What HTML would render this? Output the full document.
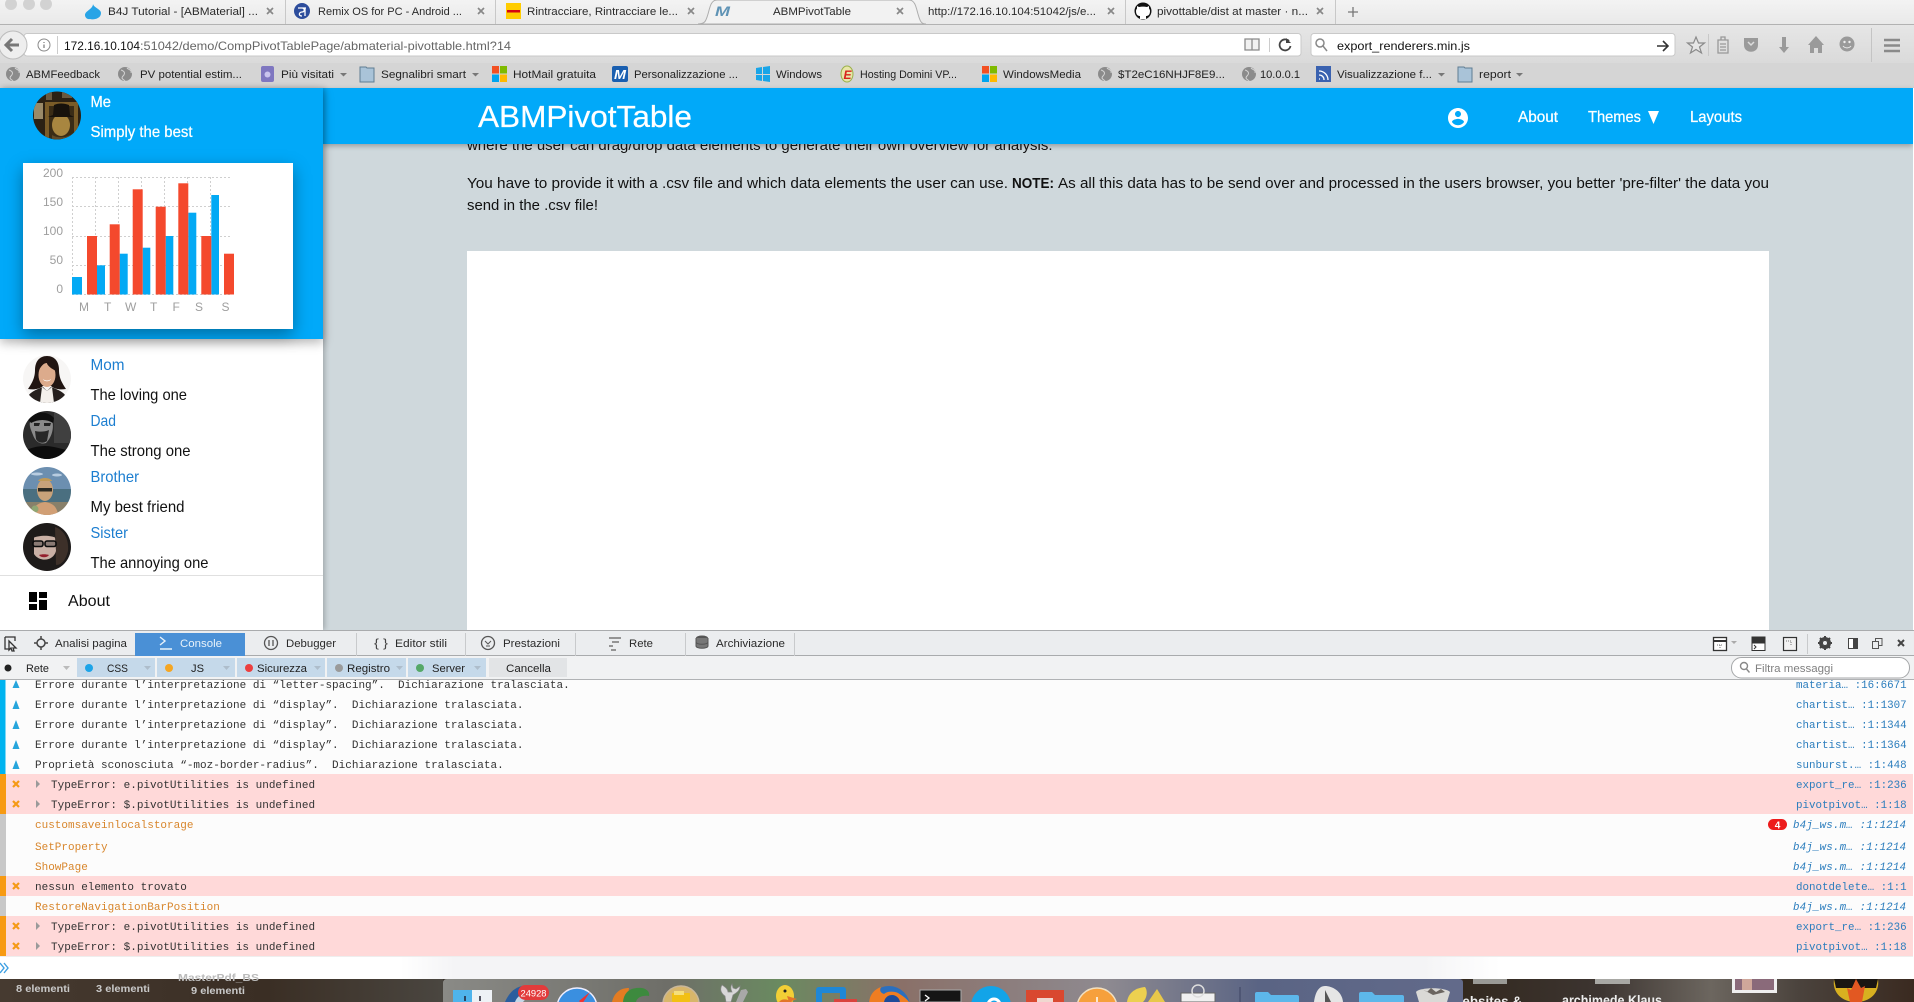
<!DOCTYPE html>
<html lang="it">
<head>
<meta charset="utf-8">
<title>ABMPivotTable</title>
<style>
html,body{margin:0;padding:0;width:1914px;height:1002px;overflow:hidden;background:#cfd8dc}
div{position:absolute}
#chrome{left:0;top:0;width:1914px;height:88px;background:#d8d8d8}
#tabs{left:0;top:0;width:1914px;height:24px;background:linear-gradient(#f3f3f3,#e9e9e9);border-bottom:1px solid #b2b2b2}
#navrow{left:0;top:25px;width:1914px;height:38px;background:linear-gradient(#e6e6e6,#dadada)}
#bmrow{left:0;top:63px;width:1914px;height:25px;background:#d5d5d5}
#main{left:323px;top:88px;width:1590px;height:542px;background:#cfd8dc}
#edge{left:1913px;top:88px;width:1px;height:891px;background:#fff}
#box{left:467px;top:251px;width:1302px;height:379px;background:#fff}
#navbar{left:323px;top:88px;width:1590px;height:56px;background:#01a9f9;box-shadow:0 2px 5px rgba(0,0,0,.28)}
#side{left:0;top:88px;width:323px;height:542px;background:#fff;box-shadow:2px 0 5px rgba(0,0,0,.22)}
#sidehead{left:0;top:88px;width:323px;height:251px;background:#01a9f9;box-shadow:0 4px 10px rgba(0,0,0,.28)}
#card{left:23px;top:163px;width:270px;height:166px;background:#fff;box-shadow:0 6px 16px rgba(0,0,0,.35)}
#dev{left:0;top:630px;width:1914px;height:349px;background:#fcfcfc}
#desk{left:0;top:979px;width:1914px;height:23px;background:#38302a}
svg{position:absolute;left:0;top:0;filter:blur(.3px)}
.s{font-family:"Liberation Sans",sans-serif}
.m{font-family:"Liberation Mono",monospace;font-size:11px;white-space:pre}
.r{font-family:"Liberation Mono",monospace;font-size:10.85px;white-space:pre}
.l{fill:#2b7dbd}
.i{font-style:italic}
.g{fill:#333}
.c{font-family:"Liberation Sans",sans-serif;font-size:11px;fill:#2a2a2a}
.b{font-family:"Liberation Sans",sans-serif;font-size:11px;fill:#222}
.h{font-family:"Liberation Sans",sans-serif;font-size:16px}
.w{stroke:#fff;stroke-width:.25}
.d{font-family:"Liberation Sans",sans-serif;font-size:15px;fill:#111}
.x{stroke:#888;stroke-width:1.7;fill:none}
.a{fill:#9e9e9e;font-family:"Liberation Sans",sans-serif;font-size:12px}
.v{fill:#222;font-family:"Liberation Sans",sans-serif;font-size:11px}
</style>
</head>
<body>
<div id="chrome"></div>
<div id="tabs"></div>
<div id="navrow"></div>
<div id="bmrow"></div>
<div id="main"></div>
<div id="box"></div>
<div id="navbar"></div>
<div id="side"></div>
<div id="sidehead"></div>
<div id="card"></div>
<div id="dev"></div>
<div id="desk"></div>
<div id="edge"></div>

<svg width="1914" height="1002" viewBox="0 0 1914 1002" xmlns="http://www.w3.org/2000/svg">
<defs>
<clipPath id="cc"><rect x="323" y="144" width="1590" height="486"/></clipPath>
<clipPath id="a0"><circle cx="57" cy="115.5" r="24"/></clipPath>
<clipPath id="a1"><circle cx="47" cy="379" r="24"/></clipPath>
<clipPath id="a2"><circle cx="47" cy="435" r="24"/></clipPath>
<clipPath id="a3"><circle cx="47" cy="491" r="24"/></clipPath>
<clipPath id="a4"><circle cx="47" cy="547" r="24"/></clipPath>
<linearGradient id="dock" x1="0" x2="1" y1="0" y2="0">
<stop offset="0" stop-color="#8a8a86"/><stop offset=".22" stop-color="#6e6e68"/><stop offset=".33" stop-color="#6a8a60"/><stop offset=".45" stop-color="#8a7068"/><stop offset=".65" stop-color="#8e8a90"/><stop offset=".8" stop-color="#5a6484"/><stop offset="1" stop-color="#626a8a"/>
</linearGradient>
<linearGradient id="dl" x1="0" x2="1" y1="0" y2="0">
<stop offset="0" stop-color="#463a30"/><stop offset=".6" stop-color="#3a2e24"/><stop offset="1" stop-color="#4a4640"/>
</linearGradient>
<linearGradient id="dr" x1="0" x2="1" y1="0" y2="0">
<stop offset="0" stop-color="#33291f"/><stop offset=".3" stop-color="#3c3430"/><stop offset=".55" stop-color="#6c665f"/><stop offset=".75" stop-color="#4a423c"/><stop offset="1" stop-color="#3a2a20"/>
</linearGradient>
<linearGradient id="sh" x1="0" x2="1" y1="0" y2="0">
<stop offset="0" stop-color="#fff"/><stop offset=".05" stop-color="#f4f4f6"/><stop offset=".93" stop-color="#f4f4f6"/><stop offset="1" stop-color="#fff"/>
</linearGradient>
</defs>

<!-- window controls -->
<circle cx="11" cy="4" r="6" fill="#d2d2d2"/><circle cx="29" cy="4" r="6" fill="#d2d2d2"/><circle cx="46" cy="4" r="6" fill="#d2d2d2"/>

<!-- tabs -->
<path d="M698 24c7 0 8-3 10-10s3-14 9-14h192c6 0 7 7 9 14s3 10 8 10z" fill="#f2f2f2" stroke="#adadad"/>
<path d="M93 4c0 5-8 7-8 11a4 4 0 0 0 5 4c3 1 11 0 11-6 0-4-7-5-8-9z" fill="#28a4e6"/>
<text class="c" x="108" y="15" textLength="150" lengthAdjust="spacingAndGlyphs">B4J Tutorial - [ABMaterial] ...</text>
<path class="x" d="M267 8l6 6m0-6l-6 6"/>
<path d="M285.500 0v24" stroke="#c8c8c8"/>
<circle cx="302" cy="11" r="8" fill="#2d4d9c"/>
<path d="M298 8h8M302 8c3 0 3 4 0 4s-4 4 0 4M305 8v8" stroke="#fff" stroke-width="1.300" fill="none"/>
<text class="c" x="318" y="15" textLength="144" lengthAdjust="spacingAndGlyphs">Remix OS for PC - Android ...</text>
<path class="x" d="M478 8l6 6m0-6l-6 6"/>
<path d="M495.500 0v24" stroke="#c8c8c8"/>
<rect x="506" y="3" width="15" height="16" fill="#fc0"/>
<rect x="507" y="10" width="13" height="2.500" fill="#d40511"/>
<text class="c" x="527" y="15" textLength="151" lengthAdjust="spacingAndGlyphs">Rintracciare, Rintracciare le...</text>
<path class="x" d="M688 8l6 6m0-6l-6 6"/>
<text class="s" x="715" y="16" font-size="14" font-weight="bold" font-style="italic" fill="#5f93b5" textLength="15" lengthAdjust="spacingAndGlyphs">M</text>
<text class="c" x="773" y="15" textLength="78" lengthAdjust="spacingAndGlyphs">ABMPivotTable</text>
<path class="x" d="M897 8l6 6m0-6l-6 6"/>
<text class="c" x="928" y="15" textLength="168" lengthAdjust="spacingAndGlyphs">http://172.16.10.104:51042/js/e...</text>
<path class="x" d="M1108 8l6 6m0-6l-6 6"/>
<path d="M1125.500 0v24" stroke="#c8c8c8"/>
<circle cx="1143" cy="11" r="8.500" fill="#111"/>
<path d="M1140 19v-3c-2 0-4-1-4-5 0-1 .5-2 1-2.500V6l2 1c2-.5 6-.5 8 0l2-1v2.500c.5.5 1 1.500 1 2.500 0 4-2 5-4 5v3z" fill="#fff"/>
<text class="c" x="1157" y="15" textLength="151" lengthAdjust="spacingAndGlyphs">pivottable/dist at master · n...</text>
<path class="x" d="M1317 8l6 6m0-6l-6 6"/>
<path d="M1335.500 0v24" stroke="#c8c8c8"/>
<path d="M1353 7v10M1348 12h10" stroke="#777" stroke-width="1.300"/>

<!-- nav row -->
<rect x="24" y="33.500" width="1277" height="22.500" rx="3" fill="#fff" stroke="#c9c9c9"/>
<circle cx="13" cy="45" r="14" fill="#eee" stroke="#bcbcbc"/>
<path d="M7 45h12M12 39l-6 6 6 6" stroke="#777" stroke-width="3" fill="none"/>
<circle cx="44" cy="45" r="6" fill="none" stroke="#8a8a8a"/>
<path d="M44 42v1M44 44.500v3.500" stroke="#777" stroke-width="1.200"/>
<path d="M57.500 36v18" stroke="#ccc"/>
<text class="s" x="64" y="50" font-size="12" fill="#111" textLength="76" lengthAdjust="spacingAndGlyphs">172.16.10.104</text>
<text class="s" x="140" y="50" font-size="12" fill="#666" textLength="371" lengthAdjust="spacingAndGlyphs">:51042/demo/CompPivotTablePage/abmaterial-pivottable.html?14</text>
<path d="M1245 39h14v11h-14zM1252 39v11" fill="#f1f1f1" stroke="#8a8a8a" stroke-width="1.300"/>
<path d="M1269.500 38v14" stroke="#ccc"/>
<path d="M1289 41a5.500 5.500 0 1 0 1.500 5" fill="none" stroke="#444" stroke-width="1.800"/>
<path d="M1286 38v5h5z" fill="#444"/>
<rect x="1311" y="33.500" width="364" height="22.500" rx="3" fill="#fff" stroke="#c9c9c9"/>
<circle cx="1320" cy="43" r="4" fill="none" stroke="#888" stroke-width="1.500"/>
<path d="M1323 46l4 5" stroke="#888" stroke-width="1.500"/>
<text class="s" x="1337" y="50" font-size="12" fill="#111" textLength="133" lengthAdjust="spacingAndGlyphs">export_renderers.min.js</text>
<path d="M1657 46h10M1663 41l5 5-5 5" stroke="#333" stroke-width="1.600" fill="none"/>
<path d="M1696 37l2.500 6h6l-5 4 2 6-5.500-3.500-5.500 3.500 2-6-5-4h6z" fill="#e6e6e6" stroke="#8a8a8a" stroke-width="1.200"/>
<path d="M1708.500 34v22" stroke="#c8c8c8"/>
<path d="M1718 40h10v13h-10zM1721 37h4v3h-4zM1720 44h6M1720 47h6M1720 50h6" fill="none" stroke="#999" stroke-width="1.300"/>
<path d="M1744 38h14v7c0 9-14 9-14 0z" fill="#9a9a9a"/><path d="M1748 42l3 3 3-3" stroke="#ddd" stroke-width="1.500" fill="none"/>
<path d="M1782 37h4v10h3l-5 6-5-6h3z" fill="#9a9a9a"/>
<path d="M1816 36l8 9h-2v8h-4v-5h-4v5h-4v-8h-2z" fill="#9a9a9a"/>
<circle cx="1847" cy="44" r="7.500" fill="#9a9a9a"/><circle cx="1844.500" cy="42" r="1.200" fill="#eee"/><circle cx="1849.500" cy="42" r="1.200" fill="#eee"/><path d="M1843 46c2 2.500 6 2.500 8 0" stroke="#eee" fill="none"/>
<path d="M1871.500 28v34" stroke="#c4c4c4"/>
<path d="M1884 40h16M1884 45.500h16M1884 51h16" stroke="#8a8a8a" stroke-width="2.500"/>

<!-- bookmarks -->
<circle cx="13" cy="74" r="7" fill="#8b8b8b"/><path d="M9 70c3 1 5 3 2 6s2 4 2 5M15 68c2 2 5 2 4 5" stroke="#d5d5d5" fill="none"/>
<text class="b" x="26" y="78" textLength="74" lengthAdjust="spacingAndGlyphs">ABMFeedback</text>
<circle cx="125" cy="74" r="7" fill="#8b8b8b"/><path d="M121 70c3 1 5 3 2 6s2 4 2 5M127 68c2 2 5 2 4 5" stroke="#d5d5d5" fill="none"/>
<text class="b" x="140" y="78" textLength="102" lengthAdjust="spacingAndGlyphs">PV potential estim...</text>
<rect x="261" y="66" width="13" height="16" rx="2" fill="#7f77c0"/><circle cx="267.500" cy="74.500" r="3" fill="#c9c4ee"/>
<text class="b" x="281" y="78" textLength="53" lengthAdjust="spacingAndGlyphs">Più visitati</text>
<path d="M340 73h7l-3.500 3.500z" fill="#777"/>
<path d="M360 67h6l1 1h7v14h-14z" fill="#a9c3d8" stroke="#607d92"/>
<text class="b" x="381" y="78" textLength="85" lengthAdjust="spacingAndGlyphs">Segnalibri smart</text>
<path d="M472 73h7l-3.500 3.500z" fill="#777"/>
<rect x="492" y="66" width="7" height="7.500" fill="#f25022"/><rect x="500" y="66" width="7" height="7.500" fill="#7fba00"/><rect x="492" y="74.500" width="7" height="7.500" fill="#00a4ef"/><rect x="500" y="74.500" width="7" height="7.500" fill="#ffb900"/>
<text class="b" x="513" y="78" textLength="83" lengthAdjust="spacingAndGlyphs">HotMail gratuita</text>
<rect x="612" y="66" width="16" height="16" rx="2" fill="#1a5fb0"/>
<text class="s" x="614" y="79" font-size="13" font-weight="bold" font-style="italic" fill="#fff" textLength="12" lengthAdjust="spacingAndGlyphs">M</text>
<text class="b" x="634" y="78" textLength="104" lengthAdjust="spacingAndGlyphs">Personalizzazione ...</text>
<path d="M756 68l6-1v7h-6zM763 67l7-1v8h-7zM756 75h6v6l-6-1zM763 75h7v7l-7-1z" fill="#19a5e8"/>
<text class="b" x="776" y="78" textLength="46" lengthAdjust="spacingAndGlyphs">Windows</text>
<ellipse cx="847" cy="74" rx="6" ry="8" fill="#e8e6a8" stroke="#9ab04a"/>
<text class="s" x="843.500" y="79" font-size="12" font-weight="bold" font-style="italic" fill="#d8231c">E</text>
<text class="b" x="860" y="78" textLength="97" lengthAdjust="spacingAndGlyphs">Hosting Domini VP...</text>
<rect x="982" y="66" width="7" height="7.500" fill="#f25022"/><rect x="990" y="66" width="7" height="7.500" fill="#7fba00"/><rect x="982" y="74.500" width="7" height="7.500" fill="#00a4ef"/><rect x="990" y="74.500" width="7" height="7.500" fill="#ffb900"/>
<text class="b" x="1003" y="78" textLength="78" lengthAdjust="spacingAndGlyphs">WindowsMedia</text>
<circle cx="1105" cy="74" r="7" fill="#8b8b8b"/><path d="M1101 70c3 1 5 3 2 6s2 4 2 5M1107 68c2 2 5 2 4 5" stroke="#d5d5d5" fill="none"/>
<text class="b" x="1118" y="78" textLength="107" lengthAdjust="spacingAndGlyphs">$T2eC16NHJF8E9...</text>
<circle cx="1249" cy="74" r="7" fill="#8b8b8b"/><path d="M1245 70c3 1 5 3 2 6s2 4 2 5M1251 68c2 2 5 2 4 5" stroke="#d5d5d5" fill="none"/>
<text class="b" x="1260" y="78" textLength="40" lengthAdjust="spacingAndGlyphs">10.0.0.1</text>
<rect x="1316" y="66" width="15" height="16" fill="#3a62b0"/><path d="M1319 79h1M1319 75c3 0 5 2 5 5M1319 71c5 0 9 4 9 9" stroke="#fff" stroke-width="1.300" fill="none"/>
<text class="b" x="1337" y="78" textLength="95" lengthAdjust="spacingAndGlyphs">Visualizzazione f...</text>
<path d="M1438 73h7l-3.500 3.500z" fill="#777"/>
<path d="M1458 67h6l1 1h7v14h-14z" fill="#a9c3d8" stroke="#607d92"/>
<text class="b" x="1479" y="78" textLength="32" lengthAdjust="spacingAndGlyphs">report</text>
<path d="M1516 73h7l-3.500 3.500z" fill="#777"/>

<!-- content text -->
<g clip-path="url(#cc)">
<text class="d" x="467" y="150" textLength="585.500" lengthAdjust="spacingAndGlyphs">where the user can drag/drop data elements to generate their own overview for analysis.</text>
<text class="d" x="467" y="188" textLength="541" lengthAdjust="spacingAndGlyphs">You have to provide it with a .csv file and which data elements the user can use.</text>
<text class="d" x="1012" y="188" font-weight="bold" textLength="42" lengthAdjust="spacingAndGlyphs">NOTE:</text>
<text class="d" x="1058" y="188" textLength="711" lengthAdjust="spacingAndGlyphs">As all this data has to be send over and processed in the users browser, you better 'pre-filter' the data you</text>
<text class="d" x="467" y="210" textLength="131" lengthAdjust="spacingAndGlyphs">send in the .csv file!</text>
</g>

<!-- navbar -->
<text class="s w" x="478" y="127" font-size="31" fill="#fff" textLength="214" lengthAdjust="spacingAndGlyphs">ABMPivotTable</text>
<path transform="translate(1446 106)" fill="#fff" fill-rule="evenodd" d="M12 2C6.480 2 2 6.480 2 12s4.480 10 10 10 10-4.480 10-10S17.520 2 12 2zm0 3c1.660 0 3 1.340 3 3s-1.340 3-3 3-3-1.340-3-3 1.340-3 3-3zm0 14.200c-2.500 0-4.710-1.280-6-3.220.03-1.990 4-3.080 6-3.080 1.990 0 5.970 1.090 6 3.080-1.290 1.940-3.500 3.220-6 3.220z"/>
<text class="h w" x="1518" y="122" fill="#fff" textLength="40" lengthAdjust="spacingAndGlyphs">About</text>
<text class="h w" x="1588" y="122" fill="#fff" textLength="53" lengthAdjust="spacingAndGlyphs">Themes</text>
<path d="M1648 111h11l-5.500 13z" fill="#fff"/>
<text class="h w" x="1690" y="122" fill="#fff" textLength="52" lengthAdjust="spacingAndGlyphs">Layouts</text>

<!-- sidebar header -->
<g clip-path="url(#a0)">
<rect x="33" y="91" width="48" height="49" fill="#2b2114"/>
<path d="M34 103h9v16h-9z" fill="#9a8a68"/>
<path d="M46 92h6v8h-6zM62 91h10v7H62z" fill="#6a5a40"/>
<path d="M45 102h33v36H45z" fill="#7a5c28"/>
<path d="M49 106h25v32H49z" fill="#3a2c16"/>
<ellipse cx="61" cy="125" rx="9" ry="11" fill="#a88640"/>
<path d="M48 117h26l-4-2-1-10c-5-2-11-2-15 0l-1 10z" fill="#17120c"/>
<path d="M52 135c5 3 13 3 18 0v5H52z" fill="#5e4a28"/>
</g>
<text class="h w" x="90.500" y="107" fill="#fff" textLength="20.500" lengthAdjust="spacingAndGlyphs">Me</text>
<text class="h w" x="90.500" y="137" fill="#fff" textLength="102" lengthAdjust="spacingAndGlyphs">Simply the best</text>

<!-- chart -->
<g stroke="#cfcfcf" stroke-dasharray="2 2" fill="none">
<path d="M72 177.500h159M72 206.500h159M72 236.500h159M72 265.500h159M72 294.500h159"/>
<path d="M72.500 177v118M95.500 177v118M118.500 177v118M141.500 177v118M164.500 177v118M187.500 177v118M210.500 177v118"/>
</g>
<g fill="#03a9f4">
<rect x="72" y="277" width="10" height="17.500"/><rect x="97" y="265.300" width="8" height="29.200"/><rect x="119.700" y="253.700" width="8" height="40.800"/><rect x="142.700" y="247.700" width="7.600" height="46.800"/><rect x="165.700" y="236" width="7.600" height="58.500"/><rect x="188.300" y="212.700" width="8" height="81.800"/><rect x="211.300" y="195" width="7.700" height="99.500"/>
</g>
<g fill="#f4492d">
<rect x="87" y="236" width="10" height="58.500"/><rect x="109.700" y="224.300" width="10" height="70.200"/><rect x="132.700" y="189.300" width="10" height="105.200"/><rect x="155.700" y="206.700" width="10" height="87.800"/><rect x="178.300" y="183.300" width="10" height="111.200"/><rect x="201.300" y="236" width="10" height="58.500"/><rect x="224" y="253.700" width="10" height="40.800"/>
</g>
<text class="a" x="63" y="177" text-anchor="end">200</text>
<text class="a" x="63" y="206" text-anchor="end">150</text>
<text class="a" x="63" y="235" text-anchor="end">100</text>
<text class="a" x="63" y="264" text-anchor="end">50</text>
<text class="a" x="63" y="293" text-anchor="end">0</text>
<text class="a" x="79" y="311">M</text><text class="a" x="104" y="311">T</text><text class="a" x="125" y="311">W</text><text class="a" x="150" y="311">T</text><text class="a" x="172.500" y="311">F</text><text class="a" x="195" y="311">S</text><text class="a" x="221.500" y="311">S</text>

<!-- contacts -->
<g clip-path="url(#a1)">
<rect x="23" y="355" width="48" height="48" fill="#f7f6f5"/>
<path d="M47 356c-8 0-12 6-12 14 0 8-3 13-7 19 6 1 12 0 15-3l8 0c3 3 9 4 15 3-4-6-7-11-7-19 0-8-4-14-12-14z" fill="#211512"/>
<ellipse cx="47" cy="375" rx="8.500" ry="12" fill="#dcab8c"/>
<path d="M38 372c2-5 6-9 9-10-1 3 5 7 9 9-1-7-4-11-9-11s-8 5-9 12z" fill="#211512"/>
<path d="M43 379c2 2 6 2 8 0-1 3-7 3-8 0z" fill="#fff"/>
<path d="M25 403c2-10 10-13 18-16l4 4 4-4c8 3 16 6 18 16z" fill="#26201e"/>
<path d="M42 387l5 4 5-4 2 16H40z" fill="#f4f0ec"/>
</g>
<g clip-path="url(#a2)">
<rect x="23" y="411" width="48" height="48" fill="#2b2b2b"/>
<rect x="54" y="411" width="17" height="32" fill="#404040"/>
<path d="M30 422c3-7 18-8 22-2 2 6 1 16-6 23-6 2-11-2-13-8-2-5-4-9-3-13z" fill="#8a8a8a"/>
<path d="M27 418c6-7 20-8 27 0l-1 5c-6-4-15-4-22 0z" fill="#0f0f0f"/>
<path d="M34 423h6l-1 3h-5zM44 423h7l-1 3h-6z" fill="#222"/>
<path d="M35 431c4 1 10 1 14-1l-2 11c-4 3-9 2-11-2z" fill="#262626"/>
<path d="M23 459v-8c8-3 14-5 22-5s16 3 26 5v8z" fill="#0c0c0c"/>
</g>
<g clip-path="url(#a3)">
<rect x="23" y="467" width="48" height="24" fill="#6c8fb0"/>
<ellipse cx="37" cy="474" rx="6" ry="1.500" fill="#b8cce0"/>
<ellipse cx="57" cy="475" rx="5" ry="1.500" fill="#b8cce0"/>
<rect x="23" y="489" width="48" height="13" fill="#4a6f80"/>
<rect x="23" y="502" width="48" height="13" fill="#88806a"/>
<ellipse cx="45" cy="490" rx="8" ry="11" fill="#c8a27a"/>
<path d="M38 481c2-4 12-4 14 0z" fill="#c09a58"/>
<rect x="38" y="488" width="14" height="3.500" fill="#2a2a24"/>
<path d="M32 515c1-9 6-12 13-13 7 1 12 4 13 13z" fill="#d19f75"/>
<circle cx="35" cy="509" r="3.500" fill="#8fa673"/>
</g>
<g clip-path="url(#a4)">
<rect x="23" y="523" width="48" height="48" fill="#1e1b1a"/>
<path d="M55 527c9 3 14 12 13 24-2 8-6 14-12 14z" fill="#3d3029"/>
<path d="M34 536c6-4 17-4 21 1l1 14c-3 11-17 11-22 3z" fill="#c9b0a5"/>
<path d="M33 536c6-6 18-5 23 2-5-3-17-3-23 0z" fill="#1e1b1a"/>
<rect x="33" y="541" width="10" height="5.500" rx="2" fill="#8a7a74" stroke="#0c0c0c" stroke-width="1.600"/>
<rect x="45" y="541" width="11" height="5.500" rx="2" fill="#8a7a74" stroke="#0c0c0c" stroke-width="1.600"/>
<path d="M39 555c3-1 7-1 10 0-2 3-8 3-10 0z" fill="#94202e"/>
</g>
<text class="h" x="90.500" y="370" fill="#1c7ed0" textLength="34" lengthAdjust="spacingAndGlyphs">Mom</text>
<text class="h" x="90.500" y="400" fill="#111" textLength="96.500" lengthAdjust="spacingAndGlyphs">The loving one</text>
<text class="h" x="90.500" y="426" fill="#1c7ed0" textLength="25.500" lengthAdjust="spacingAndGlyphs">Dad</text>
<text class="h" x="90.500" y="456" fill="#111" textLength="100" lengthAdjust="spacingAndGlyphs">The strong one</text>
<text class="h" x="90.500" y="482" fill="#1c7ed0" textLength="48.500" lengthAdjust="spacingAndGlyphs">Brother</text>
<text class="h" x="90.500" y="512" fill="#111" textLength="94" lengthAdjust="spacingAndGlyphs">My best friend</text>
<text class="h" x="90.500" y="538" fill="#1c7ed0" textLength="37.500" lengthAdjust="spacingAndGlyphs">Sister</text>
<text class="h" x="90.500" y="568" fill="#111" textLength="118" lengthAdjust="spacingAndGlyphs">The annoying one</text>
<path d="M0 575.500h323" stroke="#e0e0e0"/>
<path d="M29 592h8v10h-8zM39 592h8v6h-8zM29 604h8v6h-8zM39 600h8v10h-8z" fill="#000"/>
<text class="h" x="68" y="606" fill="#111" textLength="42" lengthAdjust="spacingAndGlyphs">About</text>

<!-- devtools toolbar -->
<rect x="0" y="630" width="1914" height="26" fill="#ebedef"/>
<path d="M0 630.500h1914M0 655.500h1914" stroke="#a9abad"/>
<rect x="0" y="656" width="1914" height="23" fill="#f1f2f3"/>
<path d="M0 679.500h1914" stroke="#b0b2b4"/>
<rect x="135" y="633" width="110" height="23" fill="#4a90d6"/>
<path d="M5 637h10v4M5 637v12h4M9 641l7 7-3 0 1 3-2 0-1-3-2 2z" fill="none" stroke="#333" stroke-width="1.300"/>
<circle cx="41" cy="643" r="4" fill="none" stroke="#444" stroke-width="1.500"/><path d="M41 636v3M41 647v3M34 643h3M45 643h3" stroke="#444" stroke-width="1.500"/>
<text class="c" x="55" y="647" textLength="72" lengthAdjust="spacingAndGlyphs">Analisi pagina</text>
<path d="M160 637l5 4-5 4M160 649h12" stroke="#e8f2fa" stroke-width="1.400" fill="none"/>
<text class="c" x="180" y="647" style="fill:#e8f2fa" textLength="42" lengthAdjust="spacingAndGlyphs">Console</text>
<circle cx="271" cy="643" r="6.500" fill="none" stroke="#555" stroke-width="1.300"/><path d="M269 640v6M273 640v6" stroke="#555" stroke-width="1.300"/>
<text class="c" x="286" y="647" textLength="50" lengthAdjust="spacingAndGlyphs">Debugger</text>
<path d="M356.500 633v23M465.500 633v23M575.500 633v23M685.500 633v23M794.500 633v23" stroke="#c8cacc"/>
<text class="s" x="374" y="647" font-size="12" fill="#444" textLength="14" lengthAdjust="spacingAndGlyphs">{ }</text>
<text class="c" x="395" y="647" textLength="52" lengthAdjust="spacingAndGlyphs">Editor stili</text>
<circle cx="488" cy="643" r="6.500" fill="none" stroke="#555" stroke-width="1.300"/><path d="M485 641l3 3 3-3M486 646h4" stroke="#555" fill="none"/>
<text class="c" x="503" y="647" textLength="57" lengthAdjust="spacingAndGlyphs">Prestazioni</text>
<path d="M609 638h12M612 642h7M609 646h4M611 650h5" stroke="#777" stroke-width="1.400"/>
<text class="c" x="629" y="647" textLength="24" lengthAdjust="spacingAndGlyphs">Rete</text>
<ellipse cx="702" cy="638" rx="6" ry="2.500" fill="#555"/><path d="M696 638v4c0 3 12 3 12 0v-4M696 642v4c0 3 12 3 12 0v-4" fill="#777" stroke="#555"/>
<text class="c" x="716" y="647" textLength="69" lengthAdjust="spacingAndGlyphs">Archiviazione</text>

<!-- devtools right controls -->
<rect x="1713.500" y="637.500" width="13" height="13" fill="#fff" stroke="#333" stroke-width="1.300"/><path d="M1714 641h12" stroke="#333" stroke-width="2"/><path d="M1717 645h6M1720 645v4" stroke="#777" stroke-dasharray="1 1"/>
<path d="M1731 641h6l-3 3z" fill="#aaa"/>
<rect x="1752" y="637" width="13" height="13.500" fill="#fff" stroke="#333"/><rect x="1752" y="637" width="13" height="6.500" fill="#333"/><path d="M1754 645l2 2-2 2" stroke="#333" fill="none"/>
<rect x="1783.500" y="637.500" width="13" height="13" fill="#f2f2f2" stroke="#333" stroke-width="1.200"/><path d="M1786 641h5v4" stroke="#777" stroke-dasharray="1 1" fill="none"/>
<path d="M1807.500 634v20" stroke="#c8cacc"/>
<circle cx="1825" cy="643" r="4.500" fill="none" stroke="#444" stroke-width="3"/><path d="M1825 636v14M1818 643h14M1820 638l10 10M1830 638l-10 10" stroke="#444" stroke-width="2"/><circle cx="1825" cy="643" r="2" fill="#ebedef"/>
<rect x="1848.500" y="638.500" width="9" height="10" fill="#fff" stroke="#444"/><rect x="1853" y="638" width="5" height="11" fill="#444"/>
<path d="M1872.500 641.500h6v7h-6zM1875.500 641v-2.500h6.500v7h-3" fill="none" stroke="#555"/>
<path d="M1898 640l6 6m0-6l-6 6" stroke="#444" stroke-width="2"/>

<!-- devtools filters -->
<circle cx="8" cy="668" r="3.500" fill="#222"/>
<text class="v" x="26" y="672" textLength="23" lengthAdjust="spacingAndGlyphs">Rete</text>
<path d="M63 666h7l-3.500 4z" fill="#bbb"/>
<g fill="#c5d9ea">
<rect x="77" y="658" width="78" height="19"/><rect x="157" y="658" width="78" height="19"/><rect x="237" y="658" width="88" height="19"/><rect x="327" y="658" width="79" height="19"/><rect x="408" y="658" width="78" height="19"/>
</g>
<rect x="489" y="658" width="78" height="19" fill="#e2e4e6"/>
<circle cx="89" cy="668" r="4" fill="#1ca4e8"/><text class="v" x="107" y="672" textLength="21" lengthAdjust="spacingAndGlyphs">CSS</text><path d="M144 666h7l-3.500 4z" fill="#aebdcb"/>
<circle cx="169" cy="668" r="4" fill="#f5a623"/><text class="v" x="191" y="672" textLength="13" lengthAdjust="spacingAndGlyphs">JS</text><path d="M223 666h7l-3.500 4z" fill="#aebdcb"/>
<circle cx="249" cy="668" r="4" fill="#ec3f3f"/><text class="v" x="257" y="672" textLength="50" lengthAdjust="spacingAndGlyphs">Sicurezza</text><path d="M314 666h7l-3.500 4z" fill="#aebdcb"/>
<circle cx="339" cy="668" r="4" fill="#9a9a9a"/><text class="v" x="347" y="672" textLength="43" lengthAdjust="spacingAndGlyphs">Registro</text><path d="M396 666h7l-3.500 4z" fill="#aebdcb"/>
<circle cx="420" cy="668" r="4" fill="#55a868"/><text class="v" x="432" y="672" textLength="33" lengthAdjust="spacingAndGlyphs">Server</text><path d="M474 666h7l-3.500 4z" fill="#aebdcb"/>
<text class="v" x="506" y="672" textLength="45" lengthAdjust="spacingAndGlyphs">Cancella</text>
<rect x="1731.500" y="657.500" width="178" height="20.500" rx="10" fill="#fff" stroke="#a5a7a9"/>
<circle cx="1744" cy="666" r="3.500" fill="none" stroke="#888" stroke-width="1.400"/><path d="M1746.500 669l3 3.500" stroke="#888" stroke-width="1.400"/>
<text class="s" x="1755" y="672" font-size="11" fill="#808080" textLength="78" lengthAdjust="spacingAndGlyphs">Filtra messaggi</text>

<!-- log rows -->
<g fill="#ffd9d9">
<rect x="0" y="774" width="1913" height="40"/><rect x="0" y="876" width="1913" height="20"/><rect x="0" y="916" width="1913" height="40"/>
</g>
<rect x="0" y="680" width="5.500" height="94" fill="#00b4f0"/>
<rect x="0" y="774" width="6" height="40" fill="#f79a12"/>
<rect x="0" y="814" width="6" height="62" fill="#c8c8c8"/>
<rect x="0" y="876" width="6" height="20" fill="#f79a12"/>
<rect x="0" y="896" width="6" height="20" fill="#c8c8c8"/>
<rect x="0" y="916" width="6" height="40" fill="#f79a12"/>

<g fill="#26a5dc">
<path d="M16 680l3.500 8h-7z"/><path d="M16 700l3.500 9h-7z"/><path d="M16 720l3.500 9h-7z"/><path d="M16 740l3.500 9h-7z"/><path d="M16 760l3.500 9h-7z"/>
</g>
<g stroke="#f59a16" stroke-width="2.200" fill="none">
<path d="M13 781l6 6m0-6l-6 6"/><path d="M13 801l6 6m0-6l-6 6"/><path d="M13 883l6 6m0-6l-6 6"/><path d="M13 923l6 6m0-6l-6 6"/><path d="M13 943l6 6m0-6l-6 6"/>
</g>
<g fill="#9a9a9a">
<path d="M36 780l4 4-4 4z"/><path d="M36 800l4 4-4 4z"/><path d="M36 922l4 4-4 4z"/><path d="M36 942l4 4-4 4z"/>
</g>

<text class="m g" x="35" y="688">Errore durante l’interpretazione di “letter-spacing”.  Dichiarazione tralasciata.</text>
<text class="m g" x="35" y="708">Errore durante l’interpretazione di “display”.  Dichiarazione tralasciata.</text>
<text class="m g" x="35" y="728">Errore durante l’interpretazione di “display”.  Dichiarazione tralasciata.</text>
<text class="m g" x="35" y="748">Errore durante l’interpretazione di “display”.  Dichiarazione tralasciata.</text>
<text class="m g" x="35" y="768">Proprietà sconosciuta “-moz-border-radius”.  Dichiarazione tralasciata.</text>
<text class="m g" x="51" y="788">TypeError: e.pivotUtilities is undefined</text>
<text class="m g" x="51" y="808">TypeError: $.pivotUtilities is undefined</text>
<text class="m" fill="#d8862c" x="35" y="828">customsaveinlocalstorage</text>
<text class="m" fill="#d8862c" x="35" y="850">SetProperty</text>
<text class="m" fill="#d8862c" x="35" y="870">ShowPage</text>
<text class="m g" x="35" y="890">nessun elemento trovato</text>
<text class="m" fill="#d8862c" x="35" y="910">RestoreNavigationBarPosition</text>
<text class="m g" x="51" y="930">TypeError: e.pivotUtilities is undefined</text>
<text class="m g" x="51" y="950">TypeError: $.pivotUtilities is undefined</text>

<text class="r l" x="1796" y="688">materia… :16:6671</text>
<text class="r l" x="1796" y="708">chartist… :1:1307</text>
<text class="r l" x="1796" y="728">chartist… :1:1344</text>
<text class="r l" x="1796" y="748">chartist… :1:1364</text>
<text class="r l" x="1796" y="768">sunburst.… :1:448</text>
<text class="r l" x="1796" y="788">export_re… :1:236</text>
<text class="r l" x="1796" y="808">pivotpivot… :1:18</text>
<rect x="1768" y="819" width="19" height="11" rx="5.500" fill="#ed1c1c"/>
<text class="s" x="1777.500" y="828.500" font-size="10" font-weight="bold" fill="#fff" text-anchor="middle">4</text>
<text class="r l i" x="1793" y="828" textLength="113">b4j_ws.m… :1:1214</text>
<text class="r l i" x="1793" y="850" textLength="113">b4j_ws.m… :1:1214</text>
<text class="r l i" x="1793" y="870" textLength="113">b4j_ws.m… :1:1214</text>
<text class="r l" x="1796" y="890">donotdelete… :1:1</text>
<text class="r l i" x="1793" y="910" textLength="113">b4j_ws.m… :1:1214</text>
<text class="r l" x="1796" y="930">export_re… :1:236</text>
<text class="r l" x="1796" y="950">pivotpivot… :1:18</text>

<!-- console input -->
<rect x="0" y="956" width="1913" height="23" fill="#fff"/>
<rect x="400" y="956" width="1100" height="23" fill="url(#sh)"/>
<path d="M0 956.500h1913" stroke="#eee"/>
<path d="M0 963l4 5-4 5M4 963l4 5-4 5" stroke="#3d9fe2" stroke-width="1.400" fill="none"/>

<!-- desktop -->
<rect x="0" y="979" width="443" height="23" fill="url(#dl)"/>
<rect x="1463" y="979" width="451" height="23" fill="url(#dr)"/>
<text class="s" x="178" y="981" font-size="10" fill="#bbb" font-weight="bold" textLength="81" lengthAdjust="spacingAndGlyphs">MasterPdf_BS</text>
<text class="s" x="16" y="992" font-size="10.500" font-weight="bold" fill="#c9c9c9" textLength="54" lengthAdjust="spacingAndGlyphs">8 elementi</text>
<text class="s" x="96" y="992" font-size="10.500" font-weight="bold" fill="#c9c9c9" textLength="54" lengthAdjust="spacingAndGlyphs">3 elementi</text>
<text class="s" x="191" y="994" font-size="10.500" font-weight="bold" fill="#c9c9c9" textLength="54" lengthAdjust="spacingAndGlyphs">9 elementi</text>

<text class="s" x="1450" y="1006" font-size="14" font-weight="bold" fill="#eee" textLength="72" lengthAdjust="spacingAndGlyphs">Websites &amp;</text>
<path d="M443 1002v-19q0-4 4-4h1012q4 0 4 4v19z" fill="url(#dock)"/>
<!-- dock icons -->
<rect x="453" y="990" width="39" height="12" fill="#4fb4ec"/><rect x="472" y="990" width="20" height="12" fill="#eef2f6"/>
<path d="M465 996v5M480 996v5" stroke="#223" stroke-width="1.500"/>
<path d="M505 1002c4-9 9-14 17-16l-3 16z" fill="#2a5d9e"/><path d="M515 1002c2-6 7-9 16-9l-8 9z" fill="#c5d7e8"/>
<rect x="518" y="985" width="31" height="15" rx="7.500" fill="#e23b3b"/>
<text class="s" x="533.500" y="996.500" font-size="9.500" fill="#fff" text-anchor="middle" textLength="26" lengthAdjust="spacingAndGlyphs">24928</text>
<circle cx="577" cy="1008" r="20" fill="#3a8fe0" stroke="#eef" stroke-width="1.500"/><path d="M590 992l-8 12-3-3z" fill="#e33"/>
<path d="M612 1002c2-9 8-14 17-14l-2 14z" fill="#e37c22"/><path d="M623 1002c1-9 6-15 19-14 5 1 8 4 7 8-6-1-12 1-13 6z" fill="#3d8a3e"/>
<circle cx="681" cy="1004" r="18" fill="#d8b66a" stroke="#c9b79a" stroke-width="1.500"/><rect x="672" y="993" width="18" height="9" rx="1" fill="#f2c014"/><rect x="674" y="991" width="10" height="4" fill="#f6df7a"/>
<path d="M722 985c-3 5 0 9 3 11l1 6h5l2-7c3-2 7-4 7-9l-4 3-3-1-1-4c-2 3-1 6 0 8h-4c0-3-3-5-6-7z" fill="#d8d8d8" stroke="#888" stroke-width=".7"/>
<path d="M736 1002l5-12 5-1 2 3-5 10z" fill="#a8a8a8"/>
<ellipse cx="785" cy="996" rx="9" ry="11" fill="#f2cf36"/><path d="M787 996l10 3-8 3z" fill="#e2742a"/><circle cx="785" cy="991" r="1.500" fill="#222"/><path d="M779 1002c3-4 8-3 14 0z" fill="#e2742a"/>
<path d="M816 990q0-3 3-3h24q3 0 3 3v12h-6v-9h-18v9h-6z" fill="#1f87d6"/>
<rect x="834" y="999" width="23" height="3" fill="#d9433d"/>
<circle cx="889" cy="1007" r="21" fill="#2b6fbe"/><path d="M869 1002c1-8 6-13 12-15-2 4 0 6 3 7 3-3 10-3 14-1 5 3 9 6 11 9z" fill="#ef7d22"/><circle cx="892" cy="1003" r="8" fill="#1e4b9b"/>
<rect x="920" y="990" width="41" height="12" fill="#151515" stroke="#aaa"/><path d="M925 995l4 3-4 3" stroke="#fff" stroke-width="1.300" fill="none"/>
<circle cx="991" cy="1006" r="20" fill="#12a4e8"/><circle cx="994" cy="1005" r="6" fill="none" stroke="#fff" stroke-width="3"/>
<rect x="1026" y="990" width="38" height="12" fill="#d9482f"/><rect x="1037" y="998" width="16" height="4" fill="#f0d8d0"/>
<circle cx="1097" cy="1008" r="20" fill="#f6a03c" stroke="#f2e0c0" stroke-width="1.500"/><path d="M1097 997v5" stroke="#fff" stroke-width="1.500"/>
<path d="M1127 1002c1-8 7-14 18-15 3 4 2 11-2 15z" fill="#ecd050"/><path d="M1148 1002l9-13 8 13z" fill="#e8c84a"/>
<rect x="1181" y="993" width="34" height="9" fill="#f0f0f0" stroke="#666"/><circle cx="1198" cy="991" r="6" fill="none" stroke="#ddd" stroke-width="1.500"/>
<path d="M1240 987v15" stroke="#3d4463"/>
<path d="M1255 1002v-8q0-2 2-2h11l3 3h26q2 0 2 2v5z" fill="#5db7ea"/>
<path d="M1314 1002c1-8 4-16 11-16s17 5 18 16z" fill="#e5e5e5"/><path d="M1325 990l6 12h-6z" fill="#555"/>
<path d="M1359 1002v-8q0-2 2-2h11l3 3h27q2 0 2 2v5z" fill="#5db7ea"/>
<path d="M1416 992c3-5 30-5 34 0l-3 10h-28z" fill="#dad9d6"/><path d="M1422 989l5 3 4-4 5 4 5-3 4 3-12 3z" fill="#6b6560"/>

<rect x="1473" y="979" width="34" height="5" fill="#9a9a96"/>
<rect x="1595" y="979" width="35" height="5" fill="#a8a8a4"/>
<text class="s" x="1562" y="1005" font-size="14" font-weight="bold" fill="#eee" textLength="100" lengthAdjust="spacingAndGlyphs">archimede Klaus</text>
<rect x="1732" y="979" width="45" height="14" fill="#efefef"/><rect x="1735" y="979" width="39" height="11" fill="#8a6a7a"/><rect x="1742" y="979" width="10" height="11" fill="#cfa79a"/>
<path d="M1834 979h44c2 14-8 23-22 23s-24-9-22-23z" fill="#d8b020"/>
<path d="M1834 979h44l-2 9h-40z" fill="#1a1612"/>
<path d="M1856 979l5 9 4-2-3 16h-12l-3-14 4 2z" fill="#e25822"/>
</svg>
</body>
</html>
